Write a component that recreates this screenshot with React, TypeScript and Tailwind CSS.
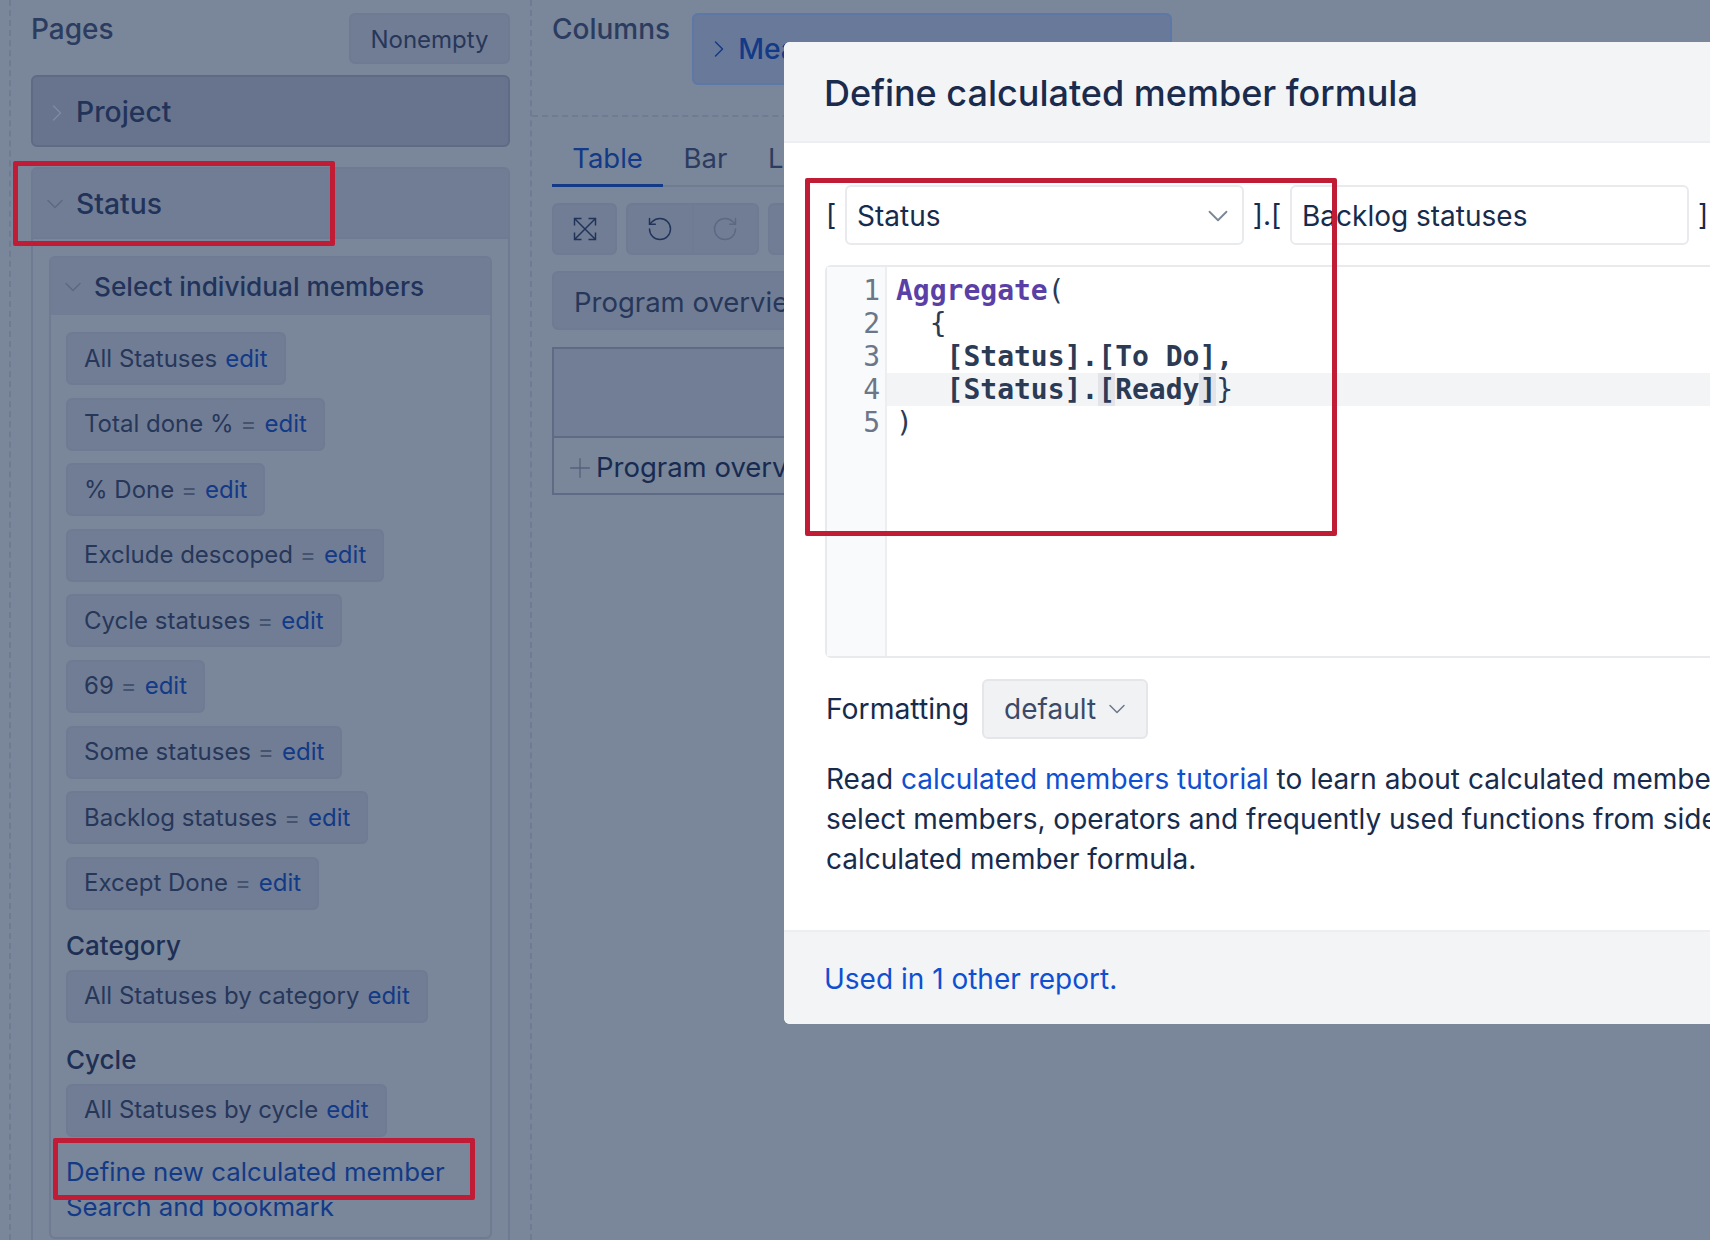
import React from 'react';
import { ChevronDown, ChevronRight, Plus, RotateCcw, RotateCw } from 'lucide-react';

const members: [string, boolean][] = [
  ['All Statuses', false],
  ['Total done %', true],
  ['% Done', true],
  ['Exclude descoped', true],
  ['Cycle statuses', true],
  ['69', true],
  ['Some statuses', true],
  ['Backlog statuses', true],
  ['Except Done', true],
];

const Chip = ({ label, calc }: { label: string; calc: boolean }) => (
  <div className="h-[53px] self-start flex items-center px-[16px] rounded-md border-2 border-[#6f7b92] bg-[#717d95] text-[24px] text-[#26375a] whitespace-nowrap">
    <span>{label}</span>
    {calc && <span className="ml-[7px] text-[#46536f]">=</span>}
    <span className="ml-[8px] text-[#123a87]">edit</span>
  </div>
);

const RedBox = ({ className }: { className: string }) => (
  <div className={`absolute border-[5px] border-[#c01c36] rounded-[2px] z-30 ${className}`} />
);

export default function App() {
  return (
    <div className="relative w-[1710px] h-[1240px] overflow-hidden bg-[#7a8699] font-['Inter',sans-serif] flex">
      {/* Left side: pages */}
      <div className="w-[523px] h-full shrink-0 ml-[9px] pl-[20px] pr-[20px] border-l-2 border-r-2 border-dashed border-[#6f7b92]">
        <div className="flex justify-between h-[75px]">
          <div className="pt-[8px] text-[28px] font-medium text-[#2b3c60]">Pages</div>
          <div className="mt-[13px] pt-[3px] h-[51px] w-[161px] flex items-center justify-center rounded-md border-2 border-[#6f7b92] bg-[#717d95] text-[24px] text-[#26375a]">
            Nonempty
          </div>
        </div>
        <div className="h-[72px] flex items-center rounded-md border-2 border-[#5f6b84] bg-[#68748d] pl-[10px] pt-[3px] text-[28.3px] font-[550] text-[#22335a]">
          <ChevronRight size={28} strokeWidth={1.25} className="text-[#7e8aa0] mr-[5px]" />
          Project
        </div>
        <div className="mt-[20px] rounded-t-md border-2 border-[#6f7b92] h-[1100px]">
          <div className="h-[70px] flex items-center bg-[#717d95] border-b-2 border-[#6f7b92] pl-[8px] pt-[2px] text-[28.3px] font-[550] text-[#22335a]">
            <ChevronDown size={28} strokeWidth={1.25} className="text-[#5c6982] mr-[7px]" />
            Status
          </div>
          <div className="mx-[16px] mt-[17px] rounded-md border-2 border-[#6f7b92] h-[983px] flex flex-col">
            <div className="h-[57px] shrink-0 flex items-center bg-[#717d95] pl-[8px] text-[26.2px] font-medium text-[#22335a]">
              <ChevronDown size={28} strokeWidth={1.25} className="text-[#5c6982] mr-[7px]" />
              Select individual members
            </div>
            <div className="px-[15px] pt-[17px] flex flex-col">
              <div className="flex flex-col gap-[12.6px]">
                {members.map(([label, calc]) => (
                  <Chip key={label} label={label} calc={calc} />
                ))}
              </div>
              <div className="mt-[17px] h-[38px] text-[26px] font-medium text-[#1e2f55] leading-[38px]">Category</div>
              <div className="mt-[5px] flex">
                <Chip label="All Statuses by category" calc={false} />
              </div>
              <div className="mt-[18px] h-[38px] text-[26px] font-medium text-[#1e2f55] leading-[38px]">Cycle</div>
              <div className="mt-[5px] flex">
                <Chip label="All Statuses by cycle" calc={false} />
              </div>
              <div className="mt-[17px] text-[25.8px] leading-[36px] text-[#123a87]">Define new calculated member</div>
              <div className="text-[25.8px] leading-[34px] text-[#123a87]">Search and bookmark</div>
            </div>
          </div>
        </div>
      </div>

      {/* Right side: report */}
      <div className="flex-1 min-w-0">
        <div className="h-[117px] border-b-2 border-dashed border-[#6f7b92] flex pl-[20px]">
          <div className="pt-[8px] text-[28px] font-medium text-[#2b3c60]">Columns</div>
          <div className="ml-[22px] mt-[13px] h-[72px] w-[480px] flex items-center rounded-md border-2 border-[#5d77a6] bg-[#69799a] pl-[11px] text-[28.3px] font-[550] text-[#123a87]">
            <ChevronRight size={28} strokeWidth={1.25} className="mr-[5px]" />
            Measures
          </div>
        </div>
        <div className="pl-[20px] w-[800px]">
          <div className="h-[70px] flex items-end border-b-2 border-[#6f7b92] text-[27.5px]">
            <div className="w-[111px] h-[50px] -mb-[2px] pt-[1px] border-b-[3px] border-[#123a87] text-center text-[#123a87]">Table</div>
            <div className="w-[85px] h-[50px] -mb-[2px] pt-[1px] text-center text-[#2b3c60]">Bar</div>
            <div className="h-[50px] -mb-[2px] pt-[1px] pl-[20px] text-[#2b3c60]">Line</div>
          </div>
          <div className="mt-[16px] flex gap-[9px]">
            <div className="w-[65px] h-[52px] flex items-center justify-center rounded-md border-2 border-[#6f7b92] bg-[#717d95] text-[#22335a]">
              <svg width="28" height="28" viewBox="0 0 24 24" fill="none" stroke="currentColor" strokeWidth="1.25">
                <path d="M3 3 21 21M21 3 3 21M3 9V3H9M15 3H21V9M3 15V21H9M15 21H21V15" />
              </svg>
            </div>
            <div className="w-[133px] h-[52px] flex rounded-md border-2 border-[#6f7b92] bg-[#717d95]">
              <div className="flex-1 flex items-center justify-center border-r-2 border-[#6f7b92] text-[#22335a]">
                <RotateCcw size={28} strokeWidth={1.25} />
              </div>
              <div className="flex-1 flex items-center justify-center text-[#5c6982]">
                <RotateCw size={28} strokeWidth={1.25} />
              </div>
            </div>
            <div className="w-[65px] h-[52px] rounded-md border-2 border-[#6f7b92] bg-[#717d95]" />
          </div>
          <div className="mt-[16px] h-[59px] flex items-center pl-[20px] pt-[5px] rounded-md border-2 border-[#6f7b92] bg-[#717d95] text-[27.5px] text-[#26375a]">
            Program overview
          </div>
          <div className="mt-[17px] h-[148px] border-2 border-[#5f6b84] flex flex-col">
            <div className="h-[89px] bg-[#727e96] border-b-2 border-[#5f6b84]" />
            <div className="flex-1 flex items-center pl-[10px] pt-[5px] text-[27.5px] text-[#172b52]">
              <Plus size={32} strokeWidth={1} className="text-[#54617c]" />
              Program overview
            </div>
          </div>
        </div>
      </div>

      <RedBox className="left-[13px] top-[161px] w-[322px] h-[85px]" />
      <RedBox className="left-[53px] top-[1138px] w-[422px] h-[62px]" />

      {/* Modal */}
      <div className="absolute left-[784px] top-[42px] w-[1100px] h-[982px] rounded-l-md bg-white flex flex-col text-[#172b4d] z-20">
        <div className="h-[101px] shrink-0 flex items-center pl-[40px] pt-[3px] bg-[#f3f4f6] border-b-2 border-[#eceef1] rounded-tl-md text-[36px] font-[550] text-[#1a2b4d]">
          Define calculated member formula
        </div>
        <div className="flex-1 pl-[41px]">
          <div className="mt-[42px] flex items-center h-[60px] text-[28px]">
            <span className="w-[20px] shrink-0 pl-[1px]">[</span>
            <div className="w-[399px] shrink-0 h-[60px] flex items-center justify-between pl-[10px] pr-[7px] pt-[2px] rounded-md border-2 border-[#e8eaee]">
              Status
              <ChevronDown size={34} strokeWidth={1.25} className="text-[#7a8699]" />
            </div>
            <span className="w-[46px] shrink-0 text-center">].[</span>
            <div className="w-[399px] shrink-0 h-[60px] flex items-center pl-[10px] pt-[2px] rounded-md border-2 border-[#e8eaee]">
              Backlog statuses
            </div>
            <span className="ml-[9px]">]</span>
          </div>
          <div className="mt-[20px] w-[1000px] h-[393px] flex rounded-l-md border-2 border-[#e8eaee] font-['DejaVu_Sans_Mono',monospace] text-[28px] leading-[33px]">
            <div className="w-[60px] shrink-0 pt-[7px] pr-[5px] text-right bg-[#f9fafb] border-r-2 border-[#eceef1] text-[#6b7688]">
              <div>1</div>
              <div>2</div>
              <div>3</div>
              <div>4</div>
              <div>5</div>
            </div>
            <div className="flex-1 pt-[7px] whitespace-pre font-semibold text-[#2b3a55]">
              <div className="pl-[9px] text-[#5a3fa6] font-bold">
                Aggregate<span className="font-normal text-[#2b3a55]">(</span>
              </div>
              <div className="pl-[9px] font-normal">  {'{'}</div>
              <div className="pl-[9px]">   [Status].[To Do],</div>
              <div className="pl-[9px] bg-[#f3f4f6]">
                {'   [Status].'}
                <span className="bg-[#e2e4e9]">[</span>Ready<span className="bg-[#e2e4e9]">]</span>
                <span className="font-normal">{'}'}</span>
              </div>
              <div className="pl-[9px] font-normal">)</div>
            </div>
          </div>
          <div className="mt-[21px] ml-[1px] flex items-center text-[28.3px]">
            <span>Formatting</span>
            <div className="ml-[13px] w-[166px] h-[60px] flex items-center pl-[20px] rounded-md border-2 border-[#e4e6ea] bg-[#f1f2f4] text-[28px] text-[#3a4a68]">
              default
              <ChevronDown size={28} strokeWidth={1.25} className="ml-[7px] text-[#6b7688]" />
            </div>
          </div>
          <div className="mt-[20px] ml-[1px] text-[28px] leading-[40px] whitespace-nowrap">
            <div>
              Read <span className="text-[#0f4fd1]">calculated members tutorial</span> to learn about calculated members. You can
            </div>
            <div>select members, operators and frequently used functions from side panels to build a</div>
            <div>calculated member formula.</div>
          </div>
        </div>
        <div className="h-[94px] shrink-0 flex items-center pl-[40px] pt-[2px] bg-[#f3f4f6] border-t-2 border-[#eceef1] rounded-bl-md text-[28px] text-[#0f4fd1]">
          Used in 1 other report.
        </div>
      </div>
      <RedBox className="left-[805px] top-[178px] w-[532px] h-[358px]" />
    </div>
  );
}
